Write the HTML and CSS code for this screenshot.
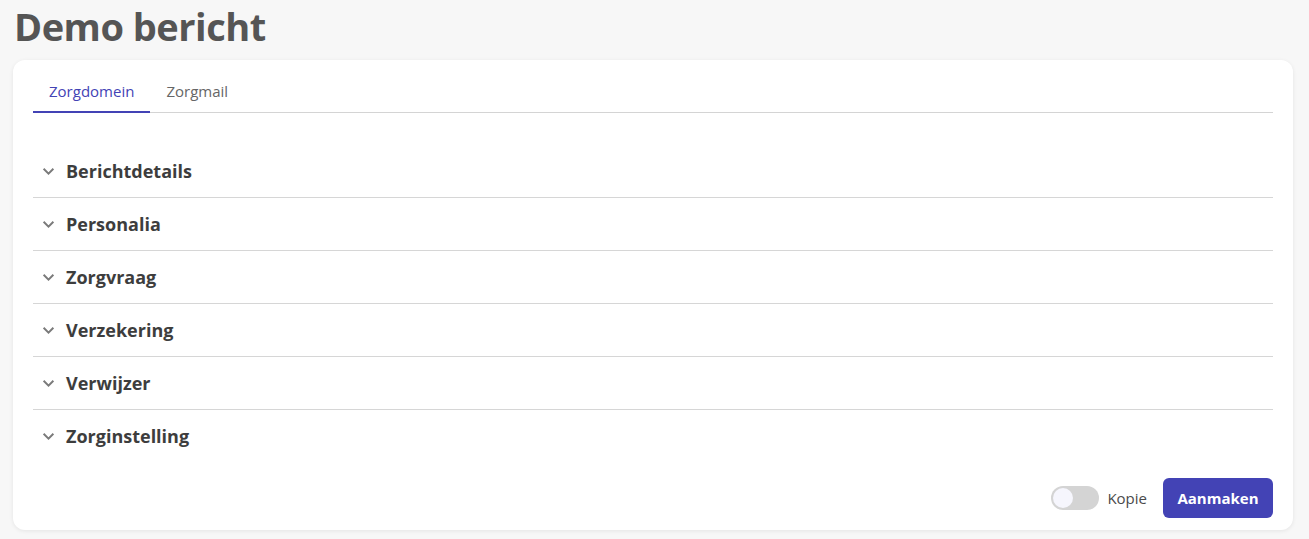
FILE: index.html
```html
<!DOCTYPE html>
<html lang="nl">
<head>
<meta charset="utf-8">
<title>Demo bericht</title>
<link rel="stylesheet" href="styles.css">
</head>
<body>
<h1 class="page-title">Demo bericht</h1>
<main class="card">
  <nav class="tabs">
    <a class="tab tab-active">Zorgdomein</a>
    <a class="tab">Zorgmail</a>
  </nav>
  <section class="accordion">
    <div class="acc-item"><svg class="chev" viewBox="0 0 12 8"><path d="M1.5 1.5 6 6 10.5 1.5"/></svg><span class="acc-title">Berichtdetails</span></div>
    <div class="acc-item"><svg class="chev" viewBox="0 0 12 8"><path d="M1.5 1.5 6 6 10.5 1.5"/></svg><span class="acc-title">Personalia</span></div>
    <div class="acc-item"><svg class="chev" viewBox="0 0 12 8"><path d="M1.5 1.5 6 6 10.5 1.5"/></svg><span class="acc-title">Zorgvraag</span></div>
    <div class="acc-item"><svg class="chev" viewBox="0 0 12 8"><path d="M1.5 1.5 6 6 10.5 1.5"/></svg><span class="acc-title">Verzekering</span></div>
    <div class="acc-item"><svg class="chev" viewBox="0 0 12 8"><path d="M1.5 1.5 6 6 10.5 1.5"/></svg><span class="acc-title">Verwijzer</span></div>
    <div class="acc-item"><svg class="chev" viewBox="0 0 12 8"><path d="M1.5 1.5 6 6 10.5 1.5"/></svg><span class="acc-title">Zorginstelling</span></div>
  </section>
  <footer class="actions">
    <label class="switch"><span class="switch-track"><span class="switch-knob"></span></span><span class="switch-label">Kopie</span></label>
    <button class="btn-primary">Aanmaken</button>
  </footer>
</main>
</body>
</html>
```
FILE: styles.css
```css
html, body {
  margin: 0;
  padding: 0;
}
body {
  background: #f7f7f7;
  font-family: "Open Sans", "Noto Sans", sans-serif;
  color: #3d3d3d;
  width: 1309px;
  height: 539px;
  overflow: hidden;
}
.page-title {
  margin: 0;
  padding: 0 0 0 14px;
  height: 60px;
  box-sizing: border-box;
  line-height: 52px;
  font-size: 38px;
  font-weight: 700;
  color: #555555;
  letter-spacing: -0.5px;
}
.card {
  margin: 0 16px 0 13px;
  background: #ffffff;
  border-radius: 12px;
  box-shadow: 0 1px 4px rgba(0, 0, 0, 0.08);
  padding: 14px 20px 12px 20px;
  height: 470px;
  box-sizing: border-box;
}
.tabs {
  display: flex;
  border-bottom: 1px solid #d4d4d4;
}
.tab {
  padding: 8px 16px 11px 16px;
  font-size: 15px;
  line-height: 18px;
  color: #666666;
  border-bottom: 2px solid transparent;
  margin-bottom: -1px;
}
.tab-active {
  color: #4343b5;
  border-bottom-color: #4343b5;
}
.accordion {
  margin-top: 32px;
}
.acc-item {
  display: flex;
  align-items: center;
  height: 52px;
  border-bottom: 1px solid #d6d6d6;
  padding-left: 9px;
}
.acc-item:last-child {
  border-bottom: none;
}
.chev {
  width: 13px;
  height: 9px;
  fill: none;
  stroke: #7a7a7a;
  stroke-width: 1.8;
  margin-right: 11px;
}
.acc-title {
  font-size: 18px;
  font-weight: 700;
  color: #3d3d3d;
}
.actions {
  display: flex;
  justify-content: flex-end;
  align-items: center;
  margin-top: 16px;
}
.switch {
  display: flex;
  align-items: center;
  margin-right: 16px;
}
.switch-track {
  width: 48px;
  height: 24px;
  border-radius: 12px;
  background: #d4d4d4;
  display: flex;
  align-items: center;
  padding-left: 2px;
  box-sizing: border-box;
}
.switch-knob {
  width: 20px;
  height: 20px;
  border-radius: 50%;
  background: #f6f6fd;
}
.switch-label {
  margin-left: 8px;
  font-size: 15px;
  color: #4a4a4a;
}
.btn-primary {
  width: 110px;
  height: 40px;
  border: none;
  border-radius: 6px;
  background: #4343b5;
  color: #ffffff;
  font-family: inherit;
  font-size: 15px;
  font-weight: 700;
}
```
